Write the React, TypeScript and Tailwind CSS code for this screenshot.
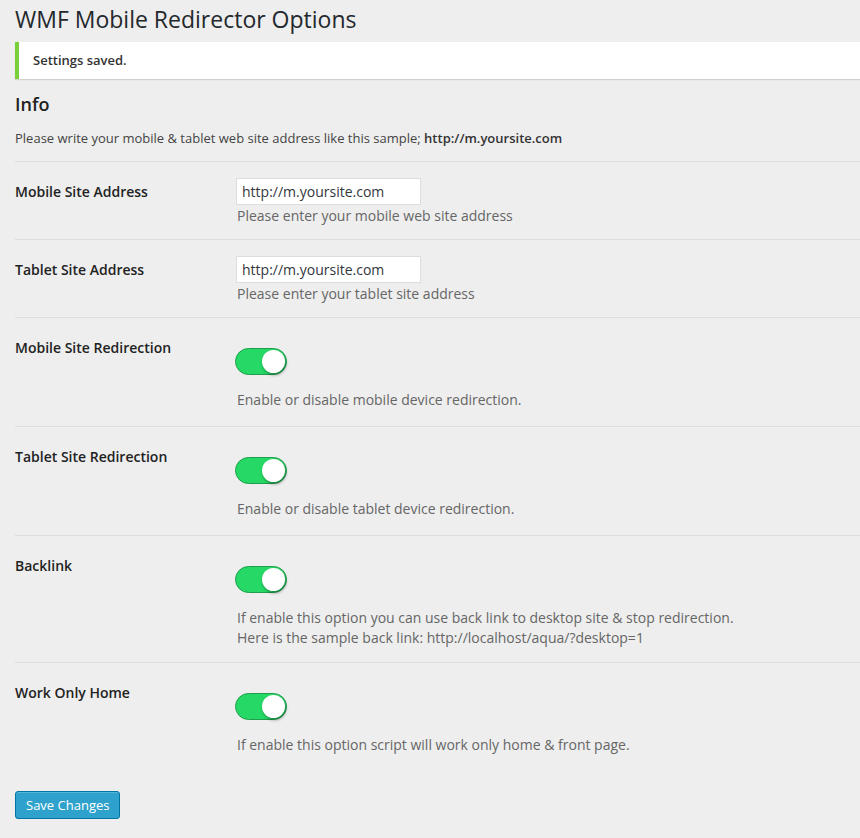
import React from "react";

const font = { fontFamily: '"Open Sans", "Noto Sans", Arial, sans-serif' };

function Toggle() {
  return (
    <div className="relative h-[27px] w-[52px] rounded-full border border-[#1f9f4c] bg-[#26d865]">
      <div className="absolute right-[1px] top-[1px] h-[23px] w-[23px] rounded-full bg-white shadow-[1px_2px_3px_rgba(0,0,0,0.35)]" />
    </div>
  );
}

function Row({
  label,
  children,
  pad = "pt-[16px] pb-[13px]",
}: {
  label: string;
  children: React.ReactNode;
  pad?: string;
}) {
  return (
    <div className="flex border-t border-[#dddddd]">
      <div className="w-[220px] shrink-0 pt-[20px] text-[14px] font-semibold leading-[20px] text-[#222222]">
        {label}
      </div>
      <div className={`flex-1 ${pad}`}>{children}</div>
    </div>
  );
}

function TextRow({ label, desc }: { label: string; desc: string }) {
  return (
    <Row label={label}>
      <div className="ml-[1px] flex h-[27px] w-[185px] items-center border border-[#dddddd] bg-white px-[5px] text-[14px] text-[#32373c]">
        http://m.yoursite.com
      </div>
      <p className="ml-[2px] mt-[1px] text-[14px] leading-[20px] text-[#666666]">{desc}</p>
    </Row>
  );
}

function SwitchRow({
  label,
  lines,
  pb = "pb-[16px]",
}: {
  label: string;
  lines: string[];
  pb?: string;
}) {
  return (
    <Row label={label} pad={`pt-[30px] ${pb}`}>
      <Toggle />
      <div className="ml-[2px] mt-[15px] text-[14px] leading-[20px] text-[#666666]">
        {lines.map((l) => (
          <p key={l}>{l}</p>
        ))}
      </div>
    </Row>
  );
}

export default function App() {
  return (
    <div className="min-h-[838px] w-full bg-[#eeeeee] pl-[15px]" style={font}>
      <h2 className="pt-[5px] text-[23px] leading-[29px] text-[#23282d]">
        WMF Mobile Redirector Options
      </h2>

      <div className="mt-[8px] flex h-[37px] items-center border-l-4 border-[#7ad03a] bg-white pl-[14px] shadow-[0_1px_1px_rgba(0,0,0,0.12)]">
        <p className="text-[13px] font-semibold text-[#333333]">Settings saved.</p>
      </div>

      <h3 className="mt-[13px] text-[18px] font-semibold leading-[24px] text-[#222222]">Info</h3>
      <p className="mt-[12px] text-[13px] leading-[20px] text-[#444444]">
        Please write your mobile &amp; tablet web site address like this sample;{" "}
        <strong className="font-semibold text-[#333333]">http://m.yoursite.com</strong>
      </p>

      <div className="mt-[13px]">
        <TextRow label="Mobile Site Address" desc="Please enter your mobile web site address" />
        <TextRow label="Tablet Site Address" desc="Please enter your tablet site address" />
        <SwitchRow
          label="Mobile Site Redirection"
          lines={["Enable or disable mobile device redirection."]}
        />
        <SwitchRow
          label="Tablet Site Redirection"
          lines={["Enable or disable tablet device redirection."]}
        />
        <SwitchRow
          label="Backlink"
          pb="pb-[14px]"
          lines={[
            "If enable this option you can use back link to desktop site & stop redirection.",
            "Here is the sample back link: http://localhost/aqua/?desktop=1",
          ]}
        />
        <SwitchRow
          label="Work Only Home"
          lines={["If enable this option script will work only home & front page."]}
        />
      </div>

      <button className="mt-[20px] h-[28px] rounded-[3px] border border-[#0074a2] bg-[#2ea2cc] px-[10px] text-[13px] leading-[26px] text-white shadow-[inset_0_1px_0_rgba(120,200,230,0.5)]">
        Save Changes
      </button>
    </div>
  );
}
